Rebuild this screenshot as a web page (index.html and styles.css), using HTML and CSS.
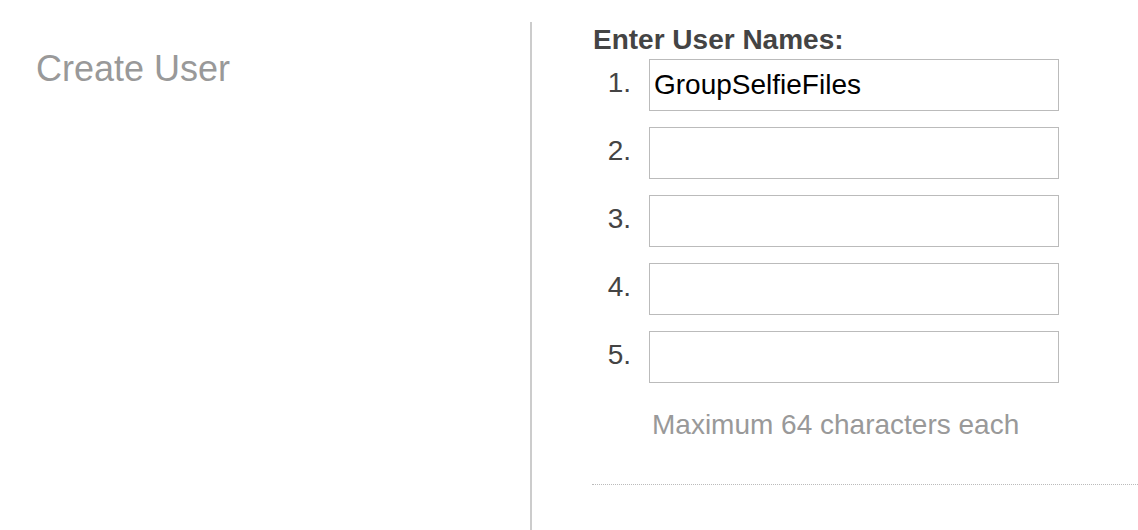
FILE: index.html
```html
<!DOCTYPE html>
<html>
<head>
<meta charset="utf-8">
<link rel="stylesheet" href="styles.css">
</head>
<body>
<div class="page">
  <aside class="side">
    <h1 class="title">Create User</h1>
  </aside>
  <main class="form">
    <h2 class="label">Enter User Names:</h2>
    <ol class="names">
      <li class="row"><span class="num">1.</span><input class="field" type="text" value="GroupSelfieFiles"></li>
      <li class="row"><span class="num">2.</span><input class="field" type="text"></li>
      <li class="row"><span class="num">3.</span><input class="field" type="text"></li>
      <li class="row"><span class="num">4.</span><input class="field" type="text"></li>
      <li class="row"><span class="num">5.</span><input class="field" type="text"></li>
    </ol>
    <p class="hint">Maximum 64 characters each</p>
    <div class="sep"></div>
  </main>
</div>
</body>
</html>
```

FILE: styles.css
```css
html, body {
  margin: 0;
  padding: 0;
  background: #fff;
  overflow: hidden;
}
body {
  font-family: "Liberation Sans", Arial, Helvetica, sans-serif;
  width: 1138px;
  height: 530px;
}
.page {
  display: flex;
  height: 530px;
}
.side {
  width: 530px;
  margin-top: 22px;
  border-right: 2px solid #cccccc;
  box-sizing: content-box;
}
.title {
  margin: 27px 0 0 36px;
  font-size: 36px;
  line-height: 40px;
  font-weight: normal;
  color: #999999;
}
.form {
  flex: 1;
  padding-left: 61px;
}
.label {
  margin: 24px 0 0 0;
  font-size: 28px;
  line-height: 32px;
  font-weight: bold;
  color: #444444;
}
.names {
  list-style: none;
  margin: 3px 0 0 0;
  padding: 0;
  display: flex;
  flex-direction: column;
  gap: 16px;
}
.row {
  display: flex;
  align-items: center;
  gap: 18px;
}
.num {
  width: 38px;
  text-align: right;
  font-size: 28px;
  line-height: 32px;
  color: #444444;
  margin-top: -4px;
}
.field {
  width: 410px;
  height: 52px;
  box-sizing: border-box;
  border: 1px solid #bbbbbb;
  border-radius: 0;
  padding: 0 4px;
  margin: 0;
  font-family: "Liberation Sans", Arial, Helvetica, sans-serif;
  font-size: 28px;
  color: #000;
  background: #fff;
  outline: none;
}
.hint {
  margin: 26px 0 0 59px;
  font-size: 28px;
  line-height: 32px;
  color: #999999;
}
.sep {
  margin-top: 43px;
  margin-left: -1px;
  border-top: 1px dotted #bbbbbb;
}
```
